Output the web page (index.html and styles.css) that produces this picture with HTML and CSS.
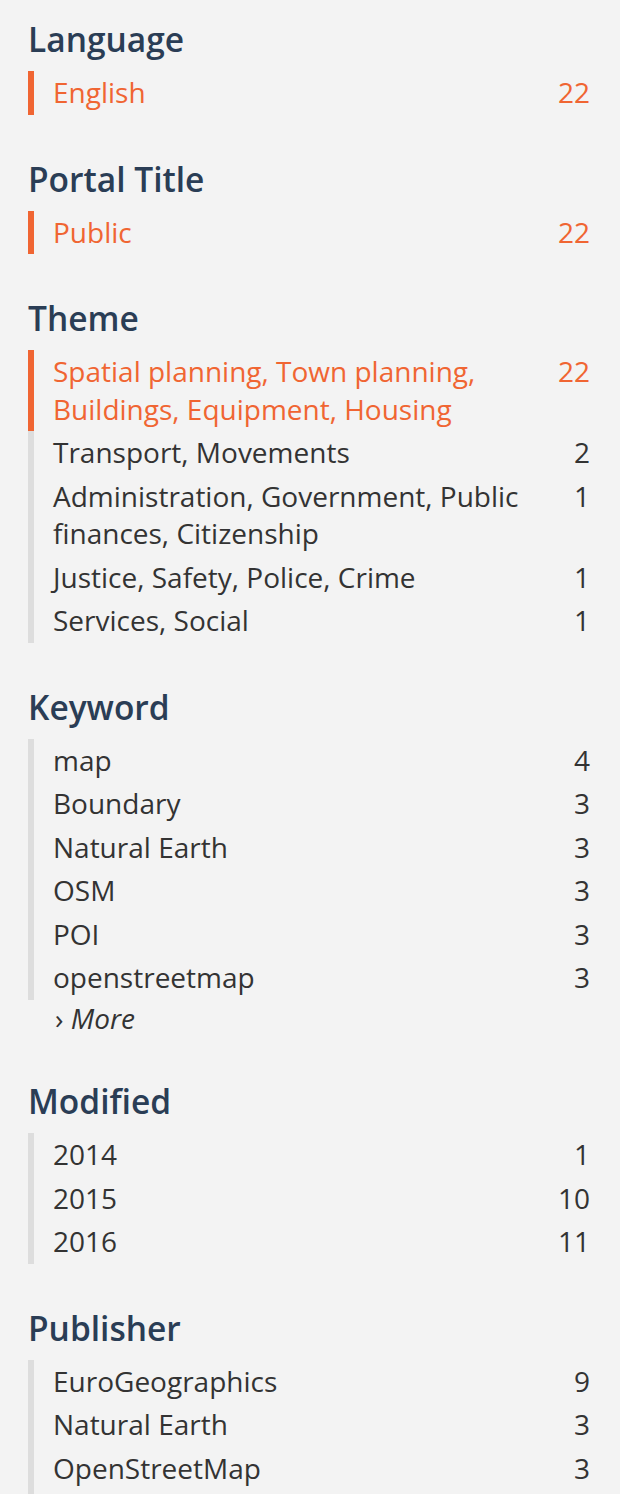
FILE: index.html
```html
<!DOCTYPE html>
<html>
<head>
<meta charset="utf-8">
<link rel="stylesheet" href="styles.css">
</head>
<body>
<div class="facets">
  <section class="facet">
    <h3 class="facet-title">Language</h3>
    <ul class="facet-list">
      <li class="facet-item active"><span class="name">English</span><span class="count">22</span></li>
    </ul>
  </section>
  <section class="facet">
    <h3 class="facet-title">Portal Title</h3>
    <ul class="facet-list">
      <li class="facet-item active"><span class="name">Public</span><span class="count">22</span></li>
    </ul>
  </section>
  <section class="facet">
    <h3 class="facet-title">Theme</h3>
    <ul class="facet-list">
      <li class="facet-item active"><span class="name">Spatial planning, Town planning, Buildings, Equipment, Housing</span><span class="count">22</span></li>
      <li class="facet-item"><span class="name">Transport, Movements</span><span class="count">2</span></li>
      <li class="facet-item"><span class="name">Administration, Government, Public finances, Citizenship</span><span class="count">1</span></li>
      <li class="facet-item"><span class="name">Justice, Safety, Police, Crime</span><span class="count">1</span></li>
      <li class="facet-item"><span class="name">Services, Social</span><span class="count">1</span></li>
    </ul>
  </section>
  <section class="facet">
    <h3 class="facet-title">Keyword</h3>
    <ul class="facet-list">
      <li class="facet-item"><span class="name">map</span><span class="count">4</span></li>
      <li class="facet-item"><span class="name">Boundary</span><span class="count">3</span></li>
      <li class="facet-item"><span class="name">Natural Earth</span><span class="count">3</span></li>
      <li class="facet-item"><span class="name">OSM</span><span class="count">3</span></li>
      <li class="facet-item"><span class="name">POI</span><span class="count">3</span></li>
      <li class="facet-item"><span class="name">openstreetmap</span><span class="count">3</span></li>
    </ul>
    <div class="more"><span class="chev">›</span> More</div>
  </section>
  <section class="facet">
    <h3 class="facet-title">Modified</h3>
    <ul class="facet-list">
      <li class="facet-item"><span class="name">2014</span><span class="count">1</span></li>
      <li class="facet-item"><span class="name">2015</span><span class="count">10</span></li>
      <li class="facet-item"><span class="name">2016</span><span class="count">11</span></li>
    </ul>
  </section>
  <section class="facet">
    <h3 class="facet-title">Publisher</h3>
    <ul class="facet-list facet-list-open">
      <li class="facet-item"><span class="name">EuroGeographics</span><span class="count">9</span></li>
      <li class="facet-item"><span class="name">Natural Earth</span><span class="count">3</span></li>
      <li class="facet-item"><span class="name">OpenStreetMap</span><span class="count">3</span></li>
    </ul>
  </section>
</div>
</body>
</html>
```
FILE: styles.css
```css
html, body {
  margin: 0;
  padding: 0;
  background: #f3f3f3;
}
body {
  font-family: "Open Sans", "Noto Sans", sans-serif;
  color: #333333;
  overflow: hidden;
}
.facets {
  padding: 19px 30px 0 28px;
  display: flex;
  flex-direction: column;
  gap: 44px;
}
.facet-title {
  margin: 0;
  font-size: 33.5px;
  line-height: 40px;
  font-weight: 600;
  color: #2a3d55;
}
.facet-list {
  list-style: none;
  margin: 12px 0 0;
  padding: 0;
  border-left: 6px solid #dddddd;
}
.facet-list-open {
  padding-bottom: 12px;
}
.facet-item {
  display: flex;
  gap: 20px;
  align-items: flex-start;
  margin-left: -6px;
  padding: 3px 0 3px 19px;
  border-left: 6px solid transparent;
  font-size: 28px;
  line-height: 37.5px;
}
.facet-item.active {
  border-left-color: #f06532;
  color: #f06532;
}
.name {
  flex: 1;
}
.count {
  text-align: right;
  min-width: 30px;
}
.more {
  padding-left: 27px;
  font-size: 28px;
  line-height: 37.5px;
  font-style: italic;
  color: #333333;
}
.chev {
  font-style: normal;
}
```
